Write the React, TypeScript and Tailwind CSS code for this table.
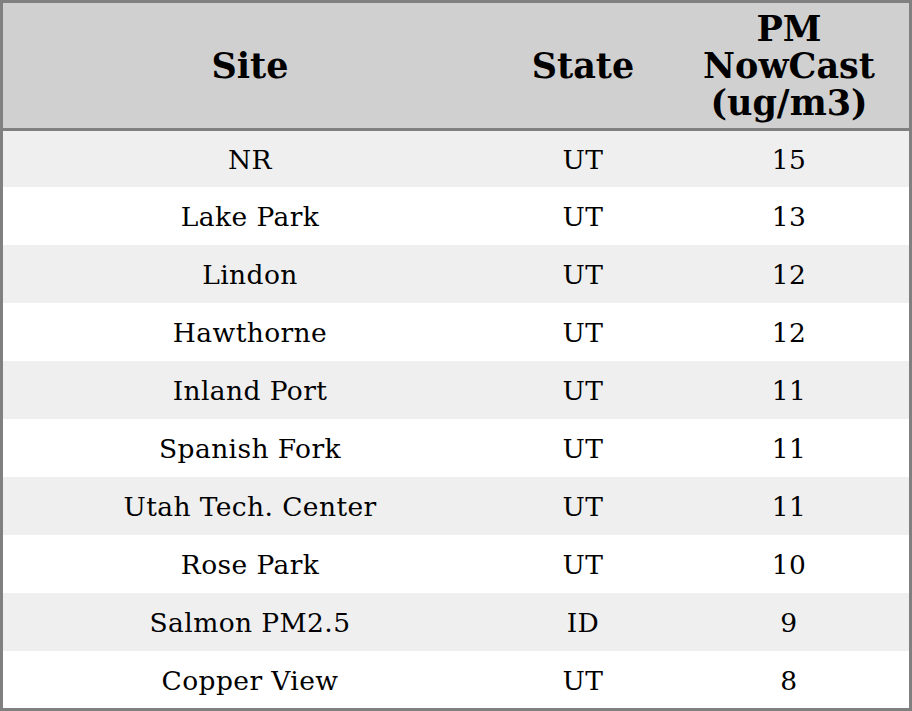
const rows = [
  { site: "NR", state: "UT", pm: 15 },
  { site: "Lake Park", state: "UT", pm: 13 },
  { site: "Lindon", state: "UT", pm: 12 },
  { site: "Hawthorne", state: "UT", pm: 12 },
  { site: "Inland Port", state: "UT", pm: 11 },
  { site: "Spanish Fork", state: "UT", pm: 11 },
  { site: "Utah Tech. Center", state: "UT", pm: 11 },
  { site: "Rose Park", state: "UT", pm: 10 },
  { site: "Salmon PM2.5", state: "ID", pm: 9 },
  { site: "Copper View", state: "UT", pm: 8 },
];

const App = () => {
  return (
    <div className="w-[912px] h-[711px] border-[3px] border-[#808080] bg-white font-['DejaVu_Serif',serif] text-black">
      <table className="w-full table-fixed border-collapse">
        <colgroup>
          <col className="w-[494px]" />
          <col className="w-[172px]" />
          <col />
        </colgroup>
        <thead>
          <tr className="h-[126px] bg-[#d0d0d0] border-b-[3px] border-[#808080] text-[35px] font-bold leading-[37px]">
            <th className="text-center align-middle">Site</th>
            <th className="text-center align-middle">State</th>
            <th className="text-center align-middle">
              PM
              <br />
              NowCast
              <br />
              (ug/m3)
            </th>
          </tr>
        </thead>
        <tbody className="text-[26.5px] tracking-[0.4px]">
          {rows.map((r, i) => (
            <tr
              key={r.site}
              className={`${i === 9 ? "h-[57px]" : "h-[58px]"} ${i % 2 === 0 ? "bg-[#efefef]" : "bg-white"}`}
            >
              <td className="text-center align-middle pt-[2px]">{r.site}</td>
              <td className="text-center align-middle pt-[2px]">{r.state}</td>
              <td className="text-center align-middle pt-[2px]">{r.pm}</td>
            </tr>
          ))}
        </tbody>
      </table>
    </div>
  );
};

export default App;
